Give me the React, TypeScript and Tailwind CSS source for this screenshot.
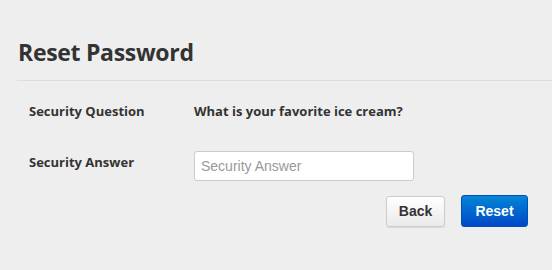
import React, { useState } from 'react';

const App: React.FC = () => {
  const [answer, setAnswer] = useState('');

  return (
    <div className="min-h-screen w-full bg-[#eeeeee] pl-[17px] pt-[36px] font-['Open_Sans',sans-serif] text-[#333333]">
      {/* Header */}
      <div className="border-b border-[#dddddd] pb-[12px] pl-px">
        <h1 className="text-[23px] font-bold leading-[32px] tracking-[-0.3px]">Reset Password</h1>
      </div>

      {/* Form */}
      <div className="pl-[12px] pr-[24px]">
        <div className="flex items-center h-[30px] mt-[16px] text-[13px] font-bold">
          <div className="w-[165px]">Security Question</div>
          <div>What is your favorite ice cream?</div>
        </div>

        <div className="flex items-start mt-[24px]">
          <div className="w-[165px] text-[13px] font-bold leading-[20px] pt-[1px]">Security Answer</div>
          <input
            type="text"
            value={answer}
            onChange={e => setAnswer(e.target.value)}
            placeholder="Security Answer"
            className="w-[220px] h-[30px] px-[6px] bg-white border border-[#cccccc] rounded-[3px] font-['Liberation_Sans',Arial,sans-serif] text-[14px] text-[#333] placeholder:text-[#999999] outline-none"
          />
        </div>

        <div className="flex justify-end gap-[16px] mt-[15px] font-['Liberation_Sans',Arial,sans-serif] text-[14px] font-bold">
          <button className="w-[59px] h-[31px] rounded-[3px] border border-[#cccccc] bg-gradient-to-b from-white to-[#eaeaea] text-[#333333] shadow-[0_1px_1px_rgba(0,0,0,0.08)]">
            Back
          </button>
          <button className="w-[67px] h-[32px] -mt-px rounded-[3px] border border-[#0050b8] bg-gradient-to-b from-[#0a85d6] to-[#0047c6] text-white">
            Reset
          </button>
        </div>
      </div>
    </div>
  );
};

export default App;
